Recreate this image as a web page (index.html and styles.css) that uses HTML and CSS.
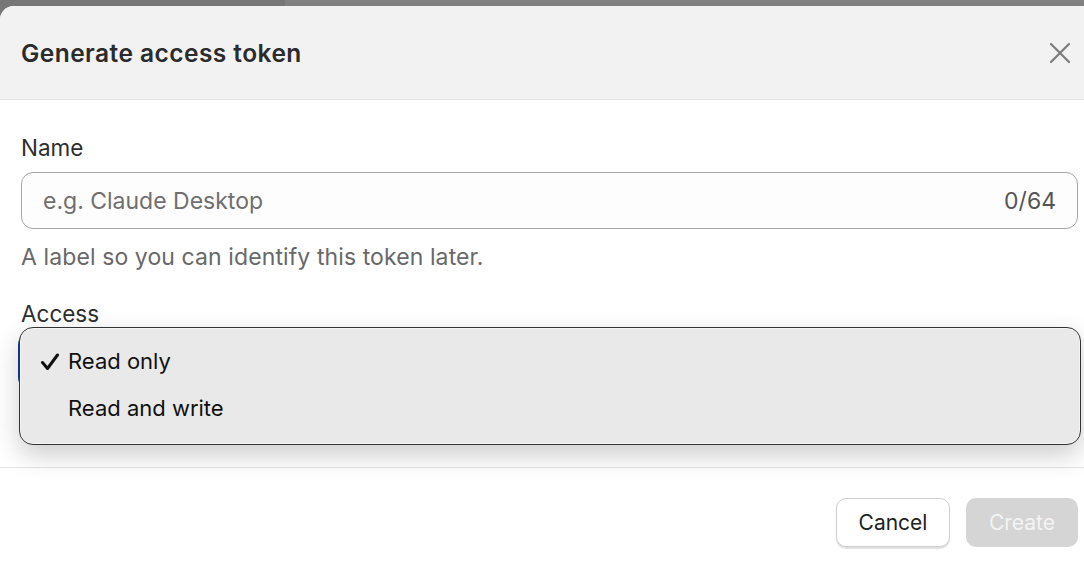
FILE: index.html
```html
<!DOCTYPE html>
<html lang="en">
<head>
<meta charset="utf-8">
<title>Generate access token</title>
<link rel="stylesheet" href="styles.css">
</head>
<body>
<div class="modal">
  <header class="modal-header">
    <h1 class="modal-title">Generate access token</h1>
    <button class="close-btn" aria-label="Close">
      <svg width="22" height="22" viewBox="0 0 22 22"><path d="M2 2 L20 20 M20 2 L2 20" stroke="#7c7c7c" stroke-width="2.2" stroke-linecap="round" fill="none"/></svg>
    </button>
  </header>
  <div class="modal-body">
    <div class="field">
      <label class="field-label">Name</label>
      <div class="input">
        <span class="placeholder">e.g. Claude Desktop</span>
        <span class="counter">0/64</span>
      </div>
      <p class="help">A label so you can identify this token later.</p>
    </div>
    <div class="field field-access">
      <label class="field-label">Access</label>
      <div class="select-wrap">
        <div class="select"></div>
        <ul class="menu">
          <li class="menu-item">
            <svg class="check" width="20" height="18" viewBox="0 0 20 18"><path d="M2.5 9.5 L7.5 15.5 L17.5 2" stroke="#111" stroke-width="3" stroke-linecap="round" stroke-linejoin="round" fill="none"/></svg>
            <span>Read only</span>
          </li>
          <li class="menu-item">
            <span class="check-space"></span>
            <span>Read and write</span>
          </li>
        </ul>
      </div>
    </div>
  </div>
  <footer class="modal-footer">
    <button class="btn btn-cancel">Cancel</button>
    <button class="btn btn-create" disabled>Create</button>
  </footer>
</div>
</body>
</html>
```

FILE: styles.css
```css
html, body {
  margin: 0;
  padding: 0;
  height: 100%;
  overflow: hidden;
}
body {
  background: linear-gradient(to right, #777777 0, #777777 285px, #808080 285px);
  font-family: "Inter", "Noto Sans", sans-serif;
  padding-top: 6px;
  box-sizing: border-box;
}
.modal {
  width: 1099px;
  height: 100%;
  background: #ffffff;
  border-top-left-radius: 14px;
}
.modal-header {
  height: 93px;
  background: #f2f2f2;
  border-bottom: 1px solid #e2e2e2;
  border-top-left-radius: 14px;
  display: flex;
  align-items: center;
  justify-content: space-between;
  padding: 0 21px;
}
.modal-title {
  margin: 0;
  font-size: 24.5px;
  font-weight: 600;
  color: #2b2b2b;
  letter-spacing: 0.45px;
}
.close-btn {
  background: none;
  border: 0;
  padding: 0;
  width: 36px;
  height: 36px;
  display: flex;
  align-items: center;
  justify-content: center;
  cursor: pointer;
}
.modal-body {
  padding: 34px 21px 0;
  height: 333px;
}
.field {
  display: flex;
  flex-direction: column;
}
.field-label {
  font-size: 22.5px;
  line-height: 28px;
  color: #2e2e2e;
}
.input {
  margin-top: 10px;
  height: 55px;
  border: 1px solid #a6a6a6;
  border-radius: 12px;
  background: #fdfdfd;
  display: flex;
  align-items: center;
  justify-content: space-between;
  padding: 0 21px;
  font-size: 23px;
}
.placeholder {
  color: #6f6f6f;
}
.counter {
  color: #555555;
}
.help {
  margin: 14px 0 0;
  font-size: 23px;
  line-height: 28px;
  color: #686868;
  letter-spacing: 0.1px;
}
.field-access {
  margin-top: 29px;
}
.select-wrap {
  position: relative;
}
.select {
  margin-top: 5px;
  height: 56px;
  border-radius: 12px;
  box-shadow: 0 0 0 3px #123f8f;
  background: #ffffff;
}
.menu {
  position: absolute;
  left: -2px;
  right: -3px;
  top: -1px;
  margin: 0;
  padding: 9px 0 13px;
  list-style: none;
  background: #e9e9e9;
  border: 1.5px solid #333333;
  border-radius: 14px;
  box-shadow: 0 10px 26px rgba(0, 0, 0, 0.2), inset 0 0 0 1px #f4f4f4;
}
.menu-item {
  display: flex;
  align-items: center;
  height: 47px;
  padding-left: 20px;
  font-size: 22px;
  color: #111111;
}
.check {
  width: 20px;
  height: 18px;
  margin-right: 8px;
  margin-top: 3px;
}
.check-space {
  width: 28px;
}
.modal-footer {
  border-top: 1px solid #e4e4e4;
  padding: 30px 21px 0;
  display: flex;
  justify-content: flex-end;
  gap: 16px;
}
.btn {
  height: 49px;
  border-radius: 10px;
  font-family: "Inter", "Noto Sans", sans-serif;
  font-size: 21px;
  padding: 0;
}
.btn-cancel {
  width: 114px;
  background: #ffffff;
  border: 1px solid #d0d0d0;
  color: #222222;
  box-shadow: 0 1.5px 1px rgba(0, 0, 0, 0.12);
}
.btn-create {
  width: 112px;
  background: #d5d5d5;
  border: 0;
  color: #f3f3f3;
}
```
